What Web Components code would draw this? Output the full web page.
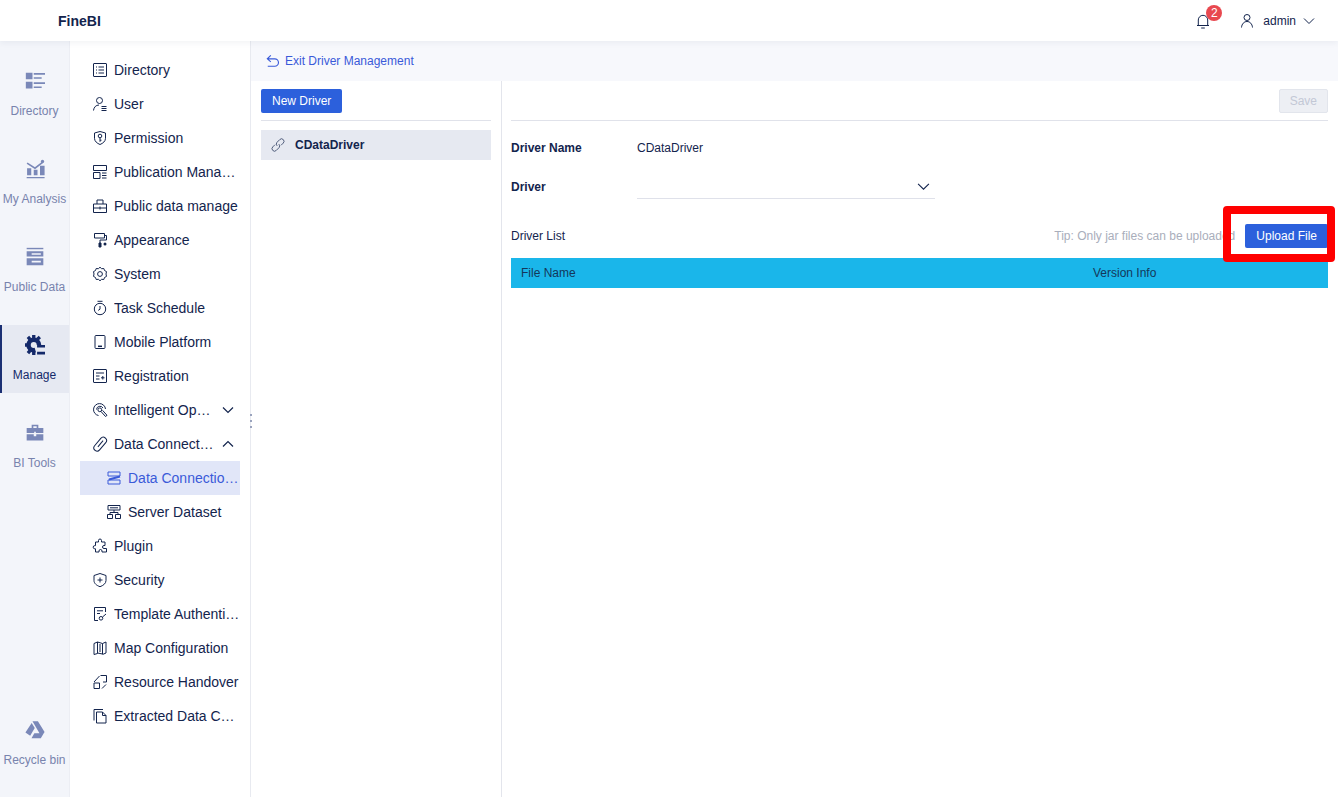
<!DOCTYPE html>
<html>
<head>
<meta charset="utf-8">
<title>FineBI</title>
<style>
    html, body { margin: 0; height: 100%; overflow: hidden; }
    body { font-family: "Liberation Sans", Arial, sans-serif; color: #13244d; background: #fff; }
    fine-app { height: 797px; }
</style>
</head>
<body>
<fine-app>
    <fine-topbar slot="top"></fine-topbar>

    <nav-rail slot="rail">
        <rail-item icon="directory">Directory</rail-item>
        <rail-item icon="analysis">My Analysis</rail-item>
        <rail-item icon="data">Public Data</rail-item>
        <rail-item icon="manage" active>Manage</rail-item>
        <rail-item icon="tools">BI Tools</rail-item>
        <rail-item icon="recycle" slot="bottom">Recycle bin</rail-item>
    </nav-rail>

    <side-menu slot="menu">
        <menu-item icon="directory">Directory</menu-item>
        <menu-item icon="user">User</menu-item>
        <menu-item icon="permission">Permission</menu-item>
        <menu-item icon="publication">Publication Management</menu-item>
        <menu-item icon="publicdata">Public data manage</menu-item>
        <menu-item icon="appearance">Appearance</menu-item>
        <menu-item icon="system">System</menu-item>
        <menu-item icon="task">Task Schedule</menu-item>
        <menu-item icon="mobile">Mobile Platform</menu-item>
        <menu-item icon="registration">Registration</menu-item>
        <menu-item icon="intelligent" arrow="down">Intelligent Operations</menu-item>
        <menu-item icon="clip" arrow="up">Data Connections</menu-item>
        <menu-item icon="connection" child selected>Data Connections</menu-item>
        <menu-item icon="dataset" child>Server Dataset</menu-item>
        <menu-item icon="plugin">Plugin</menu-item>
        <menu-item icon="security">Security</menu-item>
        <menu-item icon="template">Template Authentication</menu-item>
        <menu-item icon="map">Map Configuration</menu-item>
        <menu-item icon="handover">Resource Handover</menu-item>
        <menu-item icon="extract">Extracted Data Cache</menu-item>
    </side-menu>

    <driver-page slot="main"></driver-page>
</fine-app>

<script>
// Small inline icons, drawn on a 16x16 box
const MENU_ICONS = {
    directory: '<rect x="1.500" y="1.500" width="13" height="13" rx=".5"/><path d="M4 5h1M6.500 5H12M4 8h1M6.500 8H12M4 11h1M6.500 11H12"/>',
    user: '<circle cx="7.500" cy="4.500" r="3"/><path d="M1.500 14.500c.3-3.200 2.400-5.500 5.500-5.500M9.500 10.500h5M9.500 12.500h5M9.500 14.500h5"/>',
    permission: '<path d="M8 1.500l5.500 1.500v5.300c0 3-2.500 5-5.500 6.200-3-1.200-5.500-3.200-5.500-6.200V3z"/><circle cx="8" cy="6" r="1.800"/><path d="M8 7.800v4M8 10.200h1.500"/>',
    publication: '<path d="M1.500 1.500h13v5h-13zM1.500 8.500h6.500v6H1.500zM10 9h4.500M10 11.500h4.500M10 14h4.500"/>',
    publicdata: '<path d="M1.500 6h13v8.500h-13zM5 6V2h6v4M1.500 10h13M8 8.500v3"/>',
    appearance: '<path d="M2.500 1.500h10v4.500h-10zM12.500 3.500h2V8H8v3"/><path d="M7 11h2v4H7z" fill="currentColor"/><circle cx="13" cy="12" r="1.500" fill="currentColor" stroke="none"/>',
    system: '<path d="M8 1.200l1.600 1.500 2.200-.2.700 2 2 1.100-.5 2.400.5 2.400-2 1.100-.7 2-2.200-.2L8 14.800l-1.600-1.500-2.200.2-.7-2-2-1.100.5-2.400-.5-2.400 2-1.100.7-2 2.200.2z"/><circle cx="8" cy="8" r="2.400"/>',
    task: '<circle cx="8" cy="9" r="5.700"/><path d="M5.500 1.300h5M8 6v3.200l-1.800 1.200"/>',
    mobile: '<rect x="3" y="1.500" width="10" height="13" rx="1"/><path d="M6 12.300h4" stroke-width="1.500"/>',
    registration: '<rect x="1.500" y="1.500" width="13" height="13" rx=".5"/><path d="M4 5h8M4 8h3.500M4 11h3.500M9 9.800h3.500M10.800 8v3.500"/>',
    intelligent: '<path d="M6.500 13.500A6 6 0 1 1 13.500 7"/><path d="M4.500 7.500a3.500 3.500 0 0 1 6.500-1.500"/><circle cx="7.800" cy="7.800" r="1.900"/><path d="M9 9.500l4.500 5 1.500-1.200-4.500-5"/>',
    clip: '<g transform="rotate(40 8 8)"><rect x="5" y="0" width="6.500" height="16" rx="3.200"/><path d="M8.200 3.500v8"/></g>',
    connection: '<path d="M2 2h12v4H2zM2 10h12v4H2z"/><path d="M14 6.500L3 9.500" stroke-width="2"/>',
    dataset: '<path d="M2 1.500h12v4.500H2zM1.500 10.500h5v4h-5zM9.500 10.500h5v4h-5zM8 6v2.500M4 10.500v-2h8v2M4 3.800h8"/>',
    plugin: '<path d="M6.500 2.500a1.500 1.500 0 0 1 3 0V4H13v3.500h-1a1.500 1.500 0 0 0 0 3h2.500V14H10v-1a1.500 1.500 0 0 0-3 0v1H3.500v-3.200h-.7a1.600 1.600 0 0 1 0-3.200h.7V4h3z"/>',
    security: '<path d="M8 1.500l6 2v5c0 3-2.700 5-6 6.200-3.300-1.200-6-3.200-6-6.200v-5z"/><path d="M8 5.500v5M5.500 8h5"/>',
    template: '<path d="M13.500 6V1.500h-11v13H6M5 4.800h6M5 7.500h3"/><circle cx="9" cy="12.300" r="1.800"/><path d="M10.500 11l3.500-3"/>',
    map: '<path d="M2 3.500L5.500 2v11.500L2 14.500zM5.500 2l5 1.500V14l-5-1zM10.500 3.500L14 2v11l-3.500 1.500M8 4v8"/>',
    handover: '<path d="M8.500 1.500h6v6.500H11M2 8l5.500-6M2 9h5.500v5.500H2zM10 14.500l4-4"/>',
    extract: '<path d="M2 12.500v-11h9M4.500 4h6l3.500 3.500v7.500H4.500zM10.500 4v3.500H14"/>'
};

// Solid icons of the left rail, all on a 24x24 box
const RAIL_ICONS = {
    directory: '<path d="M1 2h8v8H1zM1 13h8v8H1z"/><path d="M10.500 2.500H24v2H10.500zM10.500 7.500H20v1.800h-9.500zM10.500 13.500H24v2H10.500zM10.500 18.500H20v1.800h-9.500z"/>',
    analysis: '<path d="M2.500 11h5v8.500h-5zM10.500 13H15v6.500h-4.500zM18 8h5.500v11.500H18zM2 21.500h21.500V23H2z"/><path d="M2.500 5l9.500 6 9-7" fill="none" stroke="currentColor" stroke-width="2"/><circle cx="21" cy="3" r="2"/>',
    data: '<path d="M2 1h20v1.700H2z"/><path d="M2 5h20v6.500H2zM8 7.500v1.800h11V7.500z" fill-rule="evenodd"/><path d="M2 13.500h20V22H2zM8 16.500v2h11v-2z" fill-rule="evenodd"/>',
    manage: '<circle cx="10.500" cy="12" r="6.300" fill="none" stroke="currentColor" stroke-width="5.400" stroke-dasharray="30.800 8.800" stroke-dashoffset="-7.700"/><path d="M8.500 0h4v4h-4zM0 10h4v4H0zM8.500 20h4v4h-4zM2 3.500L5 1l2.600 3-3 2.500zM2 20.500L5 23l2.600-3-3-2.500zM13.500 3.500l3-2.500 2.700 3-3 2.500z"/><path d="M14.500 12H24v3h-9.500zM14.500 20H24v3.500h-9.500z"/>',
    tools: '<path d="M8 2h8v4h6v6H2V6h6zm2 2v2h4V4z" fill-rule="evenodd"/><path d="M2 13.500h8.500V16h3v-2.500H22V21H2z"/><path d="M11 10.500h2V15h-2z" fill="#f3f5fa"/>',
    recycle: '<path d="M9 1.500h6.500l8 12.800-3.700 5.800zM8 3.500l3.700 6L6.200 19 .5 15zM7.800 22l3.400-6h11.300l-3.500 6z"/>'
};

const tpl = (html) => {
    const t = document.createElement('template');
    t.innerHTML = html;
    return t;
};

// Outer frame: top bar over rail, menu and main area
const appTemplate = tpl(`
    <style>
        :host { display: flex; flex-direction: column; }
        .body { flex: 1; display: flex; min-height: 0; }
    </style>
    <slot name="top"></slot>
    <div class="body">
        <slot name="rail"></slot>
        <slot name="menu"></slot>
        <slot name="main"></slot>
    </div>
`);

class FineApp extends HTMLElement {
    constructor() {
        super();
        this.attachShadow({ mode: 'open' }).appendChild(appTemplate.content.cloneNode(true));
    }
}

const topbarTemplate = tpl(`
    <style>
        :host {
            display: flex; align-items: center; flex: none; position: relative; z-index: 2;
            height: 41px; padding: 0 23px 0 58px; background: #fff;
            box-shadow: 0 2px 6px rgba(30, 45, 90, .06);
            font-family: "Liberation Sans", Arial, sans-serif;
        }
        .logo { font-size: 14px; font-weight: 700; color: #13244d; flex: 1; }
        .bell { position: relative; display: flex; width: 16px; height: 16px; margin-right: 28px; color: #13244d; }
        .badge {
            position: absolute; left: 11px; top: -8px; min-width: 16px; height: 16px; border-radius: 8px;
            background: #e8484f; color: #fff; font-size: 12px; line-height: 16px; text-align: center;
        }
        .user { display: flex; align-items: center; font-size: 12px; color: #13244d; }
        .user svg { display: block; }
        .name { margin: 0 7px 0 8px; }
    </style>
    <span class="logo">FineBI</span>
    <span class="bell">
        <svg width="16" height="16" viewBox="0 0 16 16" fill="none" stroke="currentColor" stroke-width="1">
            <path d="M2 12.500h12M3.300 12.500V7a4.700 4.700 0 0 1 9.400 0v5.500M6.200 15h3.600"/>
        </svg>
        <span class="badge">2</span>
    </span>
    <span class="user">
        <svg width="16" height="16" viewBox="0 0 16 16" fill="none" stroke="#13244d" stroke-width="1">
            <circle cx="8" cy="4.500" r="3"/><path d="M2.500 14.500c.3-3.500 2.500-6 5.500-6s5.200 2.500 5.500 6"/>
        </svg>
        <span class="name">admin</span>
        <svg width="12" height="12" viewBox="0 0 12 12" fill="none" stroke="#13244d" stroke-width="1">
            <path d="M1 3.500l5 5 5-5"/>
        </svg>
    </span>
`);

class FineTopbar extends HTMLElement {
    constructor() {
        super();
        this.attachShadow({ mode: 'open' }).appendChild(topbarTemplate.content.cloneNode(true));
    }
}

const railTemplate = tpl(`
    <style>
        :host {
            display: flex; flex-direction: column; flex: none; box-sizing: border-box;
            width: 70px; padding-top: 20px; background: #f3f5fa; border-right: 1px solid #eceef4;
        }
        .top { display: flex; flex-direction: column; gap: 20px; }
        .bottom { margin-top: auto; padding-bottom: 19px; }
    </style>
    <div class="top"><slot></slot></div>
    <div class="bottom"><slot name="bottom"></slot></div>
`);

class NavRail extends HTMLElement {
    constructor() {
        super();
        this.attachShadow({ mode: 'open' }).appendChild(railTemplate.content.cloneNode(true));
    }
}

const railItemTemplate = tpl(`
    <style>
        :host {
            display: flex; flex-direction: column; align-items: center; box-sizing: border-box;
            height: 68px; padding-top: 10px;
            font-size: 12px; color: #7883ad; white-space: nowrap;
        }
        :host([active]) {
            color: #14296a; background: #e6e9f2; box-shadow: inset 2px 0 0 #1b2f73;
        }
        svg { display: block; width: 20px; height: 20px; margin-bottom: 13px; fill: #7a88b8; color: #7a88b8; }
        :host([active]) svg { fill: #14296a; color: #14296a; }
    </style>
    <svg viewBox="0 0 24 24"></svg>
    <slot></slot>
`);

class RailItem extends HTMLElement {
    constructor() {
        super();
        this.attachShadow({ mode: 'open' }).appendChild(railItemTemplate.content.cloneNode(true));
    }
    connectedCallback() {
        this.shadowRoot.querySelector('svg').innerHTML = RAIL_ICONS[this.getAttribute('icon')] || '';
    }
}

const sideMenuTemplate = tpl(`
    <style>
        :host {
            display: block; position: relative; flex: none; box-sizing: border-box;
            width: 181px; padding: 12px 10px 0; background: #fff; border-right: 1px solid #e8eaf0;
        }
        .handle {
            position: absolute; right: -2px; top: 373px; width: 2px; height: 14px;
            background: repeating-linear-gradient(#9aa3bd 0 2px, transparent 2px 6px);
        }
    </style>
    <slot></slot>
    <span class="handle"></span>
`);

class SideMenu extends HTMLElement {
    constructor() {
        super();
        this.attachShadow({ mode: 'open' }).appendChild(sideMenuTemplate.content.cloneNode(true));
    }
}

const menuItemTemplate = tpl(`
    <style>
        :host {
            display: flex; align-items: center; box-sizing: border-box;
            width: 160px; height: 34px; padding-left: 12px;
            font-size: 14px; color: #13244d;
        }
        :host([child]) { padding-left: 26px; padding-right: 1px; }
        :host([selected]) { background: #e1e6f8; color: #3a5ad9; }
        .ico { flex: none; width: 16px; height: 16px; margin-right: 6px; fill: none; stroke: currentColor; stroke-width: 1; }
        .label { flex: 1; min-width: 0; overflow: hidden; white-space: nowrap; text-overflow: ellipsis; }
        .arrow { flex: none; width: 12px; height: 12px; margin: 0 6px 0 8px; fill: none; stroke: currentColor; stroke-width: 1.2; display: none; }
        :host([arrow]) .arrow { display: block; }
    </style>
    <svg class="ico" viewBox="0 0 16 16"></svg>
    <span class="label"><slot></slot></span>
    <svg class="arrow" viewBox="0 0 12 12"><path d="M1 3.500l5 5 5-5"/></svg>
`);

class MenuItem extends HTMLElement {
    constructor() {
        super();
        this.attachShadow({ mode: 'open' }).appendChild(menuItemTemplate.content.cloneNode(true));
    }
    connectedCallback() {
        this.shadowRoot.querySelector('.ico').innerHTML = MENU_ICONS[this.getAttribute('icon')] || '';
        if (this.getAttribute('arrow') === 'up') {
            this.shadowRoot.querySelector('.arrow path').setAttribute('d', 'M1 8.500l5-5 5 5');
        }
    }
}

const buttonTemplate = tpl(`
    <style>
        :host {
            display: inline-flex; align-items: center; justify-content: center; box-sizing: border-box;
            height: 24px; padding: 0 11px; border-radius: 2px;
            background: #2c60dc; color: #fff; font-size: 12px; white-space: nowrap;
        }
        :host([disabled]) {
            padding: 0 10px; background: #edeff4; color: #c3c8d6; border: 1px solid #e2e5ec;
        }
    </style>
    <slot></slot>
`);

class FineButton extends HTMLElement {
    constructor() {
        super();
        this.attachShadow({ mode: 'open' }).appendChild(buttonTemplate.content.cloneNode(true));
    }
}

const driverPageTemplate = tpl(`
    <style>
        :host {
            display: flex; flex-direction: column; flex: 1; min-width: 0; position: relative;
            font-size: 12px; color: #13244d;
        }
        .exit {
            display: flex; align-items: center; flex: none; height: 40px; padding-left: 15px;
            background: #f7f8fc; color: #3a5ad9;
        }
        .exit svg { width: 14px; height: 14px; margin-right: 5px; fill: none; stroke: currentColor; stroke-width: 1.3; }
        .panes { flex: 1; display: flex; min-height: 0; }
        .list { flex: none; width: 251px; box-sizing: border-box; padding: 8px 10px 0; border-right: 1px solid #e3e5ec; }
        .list-head { height: 31px; border-bottom: 1px solid #e0e2ea; }
        .driver {
            display: flex; align-items: center; height: 30px; margin-top: 9px; padding-left: 10px;
            background: #e6e9f1; font-weight: 700;
        }
        .driver svg { width: 14px; height: 14px; margin-right: 10px; fill: none; stroke: #4b5878; stroke-width: 1.1; }
        .detail { flex: 1; min-width: 0; padding: 8px 10px 0 9px; }
        .save-row { display: flex; justify-content: flex-end; height: 31px; border-bottom: 1px solid #e0e2ea; }
        .field { display: flex; align-items: center; }
        .field b { flex: none; width: 126px; }
        .name-row { height: 14px; margin-top: 20px; }
        .driver-row { margin-top: 20px; height: 24px; }
        .select {
            display: flex; justify-content: flex-end; align-items: center; box-sizing: border-box;
            width: 298px; height: 24px; padding-right: 5px; border-bottom: 1px solid #dfe1ea;
        }
        .select svg { width: 13px; height: 13px; fill: none; stroke: #13244d; stroke-width: 1; }
        .list-row { display: flex; align-items: center; height: 24px; margin-top: 25px; }
        .list-row .title { flex: 1; }
        .tip { color: #a9aebb; margin-right: 10px; }
        .table-head {
            display: flex; align-items: center; height: 30px; margin-top: 10px; background: #1ab6ea;
            color: #14385a;
        }
        .table-head .file { width: 572px; padding-left: 10px; }
        .mark {
            position: absolute; left: 972px; top: 165px; width: 112px; height: 56px; box-sizing: border-box;
            border: 8px solid #ff0000; border-radius: 4px; pointer-events: none;
        }
    </style>
    <div class="exit">
        <svg viewBox="0 0 16 16"><path d="M5.500 1.500L1.500 5.500l4 3.500M1.500 5.500H10a4 4 0 0 1 0 8.500H2"/></svg>
        Exit Driver Management
    </div>
    <div class="panes">
        <div class="list">
            <div class="list-head"><fine-button>New Driver</fine-button></div>
            <div class="driver">
                <svg viewBox="0 0 16 16"><path d="M9 7a3 3 0 0 1 .2 4L6 14.200a2.800 2.800 0 0 1-4-4L4.500 7.700M7 9a3 3 0 0 1-.2-4L10 1.800a2.800 2.800 0 0 1 4 4L11.500 8.300"/></svg>
                CDataDriver
            </div>
        </div>
        <div class="detail">
            <div class="save-row"><fine-button disabled>Save</fine-button></div>
            <div class="field name-row"><b>Driver Name</b><span>CDataDriver</span></div>
            <div class="field driver-row">
                <b>Driver</b>
                <div class="select"><svg viewBox="0 0 12 12"><path d="M1 3.500l5 5 5-5"/></svg></div>
            </div>
            <div class="list-row">
                <span class="title">Driver List</span>
                <span class="tip">Tip: Only jar files can be uploaded</span>
                <fine-button>Upload File</fine-button>
            </div>
            <div class="table-head"><span class="file">File Name</span><span>Version Info</span></div>
        </div>
    </div>
    <span class="mark"></span>
`);

class DriverPage extends HTMLElement {
    constructor() {
        super();
        this.attachShadow({ mode: 'open' }).appendChild(driverPageTemplate.content.cloneNode(true));
    }
}

customElements.define('fine-app', FineApp);
customElements.define('fine-topbar', FineTopbar);
customElements.define('nav-rail', NavRail);
customElements.define('rail-item', RailItem);
customElements.define('side-menu', SideMenu);
customElements.define('menu-item', MenuItem);
customElements.define('fine-button', FineButton);
customElements.define('driver-page', DriverPage);
</script>
</body>
</html>
